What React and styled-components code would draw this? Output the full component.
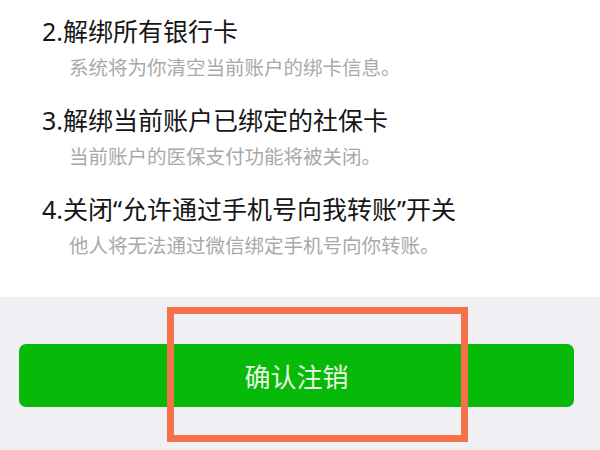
import styled, { createGlobalStyle } from "styled-components";

const GlobalStyle = createGlobalStyle`
  html, body {
    margin: 0;
    padding: 0;
    background: #ffffff;
  }
  body {
    font-family: "Noto Sans", "Noto Sans CJK SC", sans-serif;
  }
`;

const Page = styled.div`
  position: relative;
  width: 600px;
  height: 450px;
  overflow: hidden;
  display: flex;
  flex-direction: column;
`;

const List = styled.div`
  height: 297px;
  box-sizing: border-box;
  padding: 14px 0 0 42px;
  background: #ffffff;
  display: flex;
  flex-direction: column;
  gap: 20px;
`;

const Item = styled.div`
  display: flex;
  flex-direction: column;
  gap: 5px;
`;

const Title = styled.div`
  font-size: 25px;
  line-height: 34px;
  color: #161616;
  white-space: nowrap;
`;

const Desc = styled.div`
  padding-left: 27px;
  font-size: 19.5px;
  line-height: 30px;
  color: #a9a9a9;
  white-space: nowrap;
`;

const Footer = styled.div`
  flex: 1;
  background: #efeff4;
  padding: 47px 26px 0 19px;
`;

const ConfirmButton = styled.button`
  display: flex;
  align-items: center;
  justify-content: center;
  width: 100%;
  height: 63px;
  border: none;
  border-radius: 7px;
  background: #07b908;
  color: #e8f6e2;
  font-family: "Noto Sans CJK SC", sans-serif;
  font-size: 26px;
  padding: 0;
`;

const Highlight = styled.div`
  position: absolute;
  left: 167px;
  top: 307px;
  width: 301px;
  height: 135px;
  box-sizing: border-box;
  border: 7px solid #f4714a;
  pointer-events: none;
`;

const items = [
  { title: "2.解绑所有银行卡", desc: "系统将为你清空当前账户的绑卡信息。" },
  { title: "3.解绑当前账户已绑定的社保卡", desc: "当前账户的医保支付功能将被关闭。" },
  {
    title: "4.关闭“允许通过手机号向我转账”开关",
    desc: "他人将无法通过微信绑定手机号向你转账。",
  },
];

const App = () => {
  return (
    <>
      <GlobalStyle />
      <Page>
        <List>
          {items.map((it) => (
            <Item key={it.title}>
              <Title>{it.title}</Title>
              <Desc>{it.desc}</Desc>
            </Item>
          ))}
        </List>
        <Footer>
          <ConfirmButton>确认注销</ConfirmButton>
        </Footer>
        <Highlight />
      </Page>
    </>
  );
};

export default App;
